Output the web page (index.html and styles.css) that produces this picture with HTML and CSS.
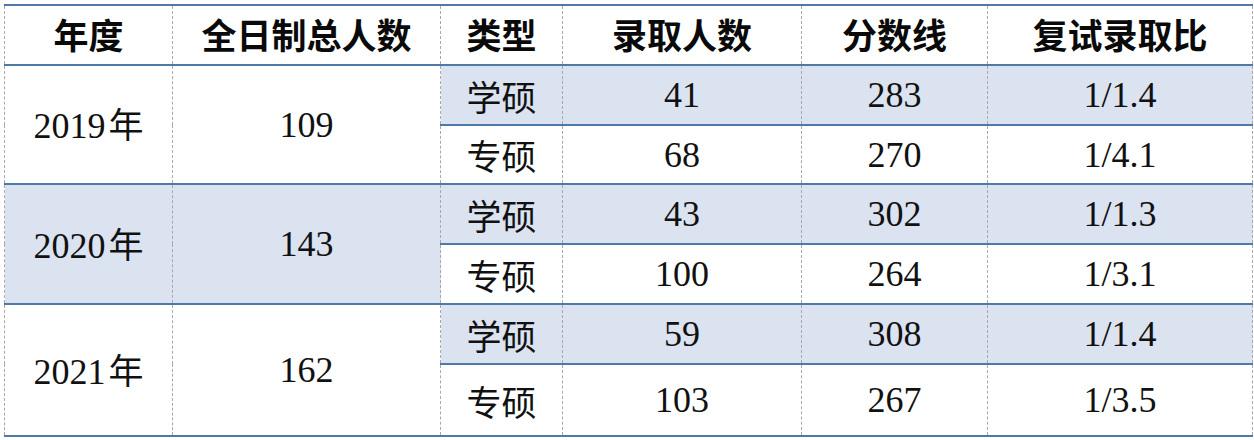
FILE: index.html
```html
<!DOCTYPE html>
<html lang="zh">
<head>
<meta charset="utf-8">
<link rel="stylesheet" href="styles.css">
</head>
<body>
<table class="stats">
  <colgroup>
    <col class="c-year"><col class="c-total"><col class="c-type"><col class="c-admit"><col class="c-score"><col class="c-ratio">
  </colgroup>
  <thead>
    <tr class="head">
      <th>年度</th><th>全日制总人数</th><th>类型</th><th>录取人数</th><th>分数线</th><th>复试录取比</th>
    </tr>
  </thead>
  <tbody>
    <tr class="r1">
      <td rowspan="2" class="plain">2019<span class="nian">年</span></td>
      <td rowspan="2" class="plain">109</td>
      <td class="shade cjk">学硕</td><td class="shade">41</td><td class="shade">283</td><td class="shade">1/1.4</td>
    </tr>
    <tr class="r2">
      <td class="cjk">专硕</td><td>68</td><td>270</td><td>1/4.1</td>
    </tr>
    <tr class="r3">
      <td rowspan="2" class="shade">2020<span class="nian">年</span></td>
      <td rowspan="2" class="shade">143</td>
      <td class="shade cjk">学硕</td><td class="shade">43</td><td class="shade">302</td><td class="shade">1/1.3</td>
    </tr>
    <tr class="r4">
      <td class="cjk">专硕</td><td>100</td><td>264</td><td>1/3.1</td>
    </tr>
    <tr class="r5">
      <td rowspan="2" class="plain">2021<span class="nian">年</span></td>
      <td rowspan="2" class="plain">162</td>
      <td class="shade cjk">学硕</td><td class="shade">59</td><td class="shade">308</td><td class="shade">1/1.4</td>
    </tr>
    <tr class="r6">
      <td class="cjk">专硕</td><td>103</td><td>267</td><td>1/3.5</td>
    </tr>
  </tbody>
</table>
</body>
</html>
```
FILE: styles.css
```css
html, body {
  margin: 0;
  padding: 0;
  background: #ffffff;
}

.stats {
  margin: 4px 0 0 4px;
  border-collapse: collapse;
  table-layout: fixed;
  width: 1248px;
  font-family: "Liberation Serif", "Noto Sans CJK SC", serif;
  font-size: 36px;
  color: #111111;
}

.c-year { width: 168px; }
.c-total { width: 268px; }
.c-type { width: 122px; }
.c-admit { width: 239px; }
.c-score { width: 186px; }
.c-ratio { width: 265px; }

.stats th,
.stats td {
  padding: 0;
  text-align: center;
  vertical-align: middle;
  border-top: 2px solid #4f79a6;
  border-bottom: 2px solid #4f79a6;
  border-left: 1px dashed #a8a8a8;
  border-right: 1px dashed #a8a8a8;
  line-height: 1;
}

.stats th {
  font-family: "Noto Sans CJK SC", sans-serif;
  font-weight: 700;
  font-size: 35px;
  color: #0a0a0a;
  height: 54px;
  padding-bottom: 4px;
}

.r1 td, .r3 td, .r4 td, .r5 td { height: 58px; }
.r2 td { height: 57px; }
.r6 td { height: 70px; }

.shade { background: #dbe2f0; }
.plain { background: #ffffff; }

.cjk {
  font-family: "Noto Sans CJK SC", sans-serif;
  font-size: 35px;
  font-weight: 400;
}

.nian {
  font-family: "Noto Sans CJK SC", sans-serif;
  font-size: 35px;
  margin-left: 3px;
}
```
